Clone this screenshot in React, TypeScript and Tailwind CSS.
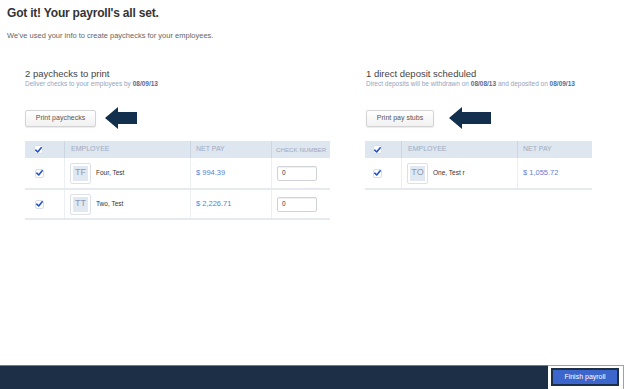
const font = { fontFamily: '"Liberation Sans", Arial, sans-serif' };

const leftRows = [
    { initials: "TF", name: "Four, Test", pay: "$ 994.39" },
    { initials: "TT", name: "Two, Test", pay: "$ 2,226.71" },
];

const rightRows = [{ initials: "TO", name: "One, Test r", pay: "$ 1,055.72" }];

function Check() {
    return (
        <span className="flex h-[9px] w-[9px] items-center justify-center rounded-[2px] border border-[#d9dfe7] bg-white">
            <svg width="7" height="6" viewBox="0 0 7 6">
                <path d="M0.8 3.2 L2.7 5 L6.2 0.8" fill="none" stroke="#2453c8" strokeWidth="1.6" strokeLinecap="round" strokeLinejoin="round" />
            </svg>
        </span>
    );
}

function Arrow({ width }: { width: number }) {
    return (
        <svg width={width} height="22" viewBox={`0 0 ${width} 22`}>
            <path d={`M0 11 L13 0 L13 5 L${width} 5 L${width} 17 L13 17 L13 22 Z`} fill="#12304d" />
        </svg>
    );
}

function Avatar({ initials }: { initials: string }) {
    return (
        <div className="h-[21px] w-[21px] rounded-[2px] border border-[#dde1e6] bg-white p-[2px]">
            <div className="flex h-full w-full items-center justify-center bg-[#e1e8f2] text-[9px] text-[#8a9ab3]">{initials}</div>
        </div>
    );
}

function Button({ label, width }: { label: string; width: string }) {
    return (
        <div className={`flex h-[17px] items-center justify-center rounded-[2px] border border-[#d4d4d4] bg-gradient-to-b from-white to-[#f1f1f1] text-[7px] text-[#555] shadow-[0_1px_1px_rgba(0,0,0,0.08)] ${width}`}>
            {label}
        </div>
    );
}

export default function App() {
    return (
        <div className="flex h-[389px] w-[624px] flex-col bg-white" style={font}>
            <div className="flex-1 pl-[7px] pt-[6px]">
                <h1 className="text-[12px] leading-[14px] font-bold tracking-[-0.2px] text-[#333]">Got it! Your payroll's all set.</h1>
                <p className="mt-[11px] text-[7.5px] leading-[9px] text-[#666]">We've used your info to create paychecks for your employees.</p>

                <div className="mt-[28px] flex">
                    {/* paychecks to print */}
                    <div className="ml-[18px] w-[305px]">
                        <h2 className="text-[9.5px] leading-[11px] text-[#444]">2 paychecks to print</h2>
                        <p className="mt-[1px] text-[6.5px] leading-[8px] text-[#93a5c0]">
                            Deliver checks to your employees by <span className="font-bold text-[#4f6c9e]">08/09/13</span>
                        </p>
                        <div className="mt-[19px] flex items-center gap-[9px]">
                            <Button label="Print paychecks" width="w-[71px]" />
                            <Arrow width={32} />
                        </div>
                        <div className="mt-[12px] border-b-2 border-[#e6e9ed]">
                            <div className="grid h-[17px] grid-cols-[40px_126px_81px_58px] items-center bg-[#dee6f0] text-[7px] text-[#9eabbf]">
                                <div className="flex h-full items-center border-r border-[#ccd6e3] pl-[9px]"><Check /></div>
                                <div className="flex h-full items-center border-r border-[#ccd6e3] pl-[6px]">EMPLOYEE</div>
                                <div className="flex h-full items-center border-r border-[#ccd6e3] pl-[5px]">NET PAY</div>
                                <div className="flex h-full items-center whitespace-nowrap pl-[4px] text-[6.2px]">CHECK NUMBER</div>
                            </div>
                            {leftRows.map((row, idx) => (
                                <div key={idx} className={`grid h-[30px] grid-cols-[40px_126px_81px_58px] ${idx > 0 ? "border-t-2 border-[#e6e9ed]" : ""}`}>
                                    <div className="flex items-center border-r border-[#eceef1] pl-[10px]"><Check /></div>
                                    <div className="flex items-center gap-[5px] border-r border-[#eceef1] pl-[5px] text-[6.5px] text-[#333]">
                                        <Avatar initials={row.initials} />
                                        {row.name}
                                    </div>
                                    <div className="flex items-center border-r border-[#eceef1] pl-[5px] text-[7.5px] text-[#5b7fd6]">{row.pay}</div>
                                    <div className="flex items-center pl-[5px]">
                                        <div className="flex h-[15px] w-[40px] items-center rounded-[2px] border border-[#cfd3d8] pl-[4px] text-[6.5px] text-[#333] shadow-[inset_0_1px_1px_rgba(0,0,0,0.06)]">0</div>
                                    </div>
                                </div>
                            ))}
                        </div>
                    </div>

                    {/* direct deposits */}
                    <div className="ml-[35px] w-[227px]">
                        <h2 className="pl-[1px] text-[9.5px] leading-[11px] text-[#444]">1 direct deposit scheduled</h2>
                        <p className="mt-[1px] pl-[1px] text-[6.5px] leading-[8px] whitespace-nowrap text-[#93a5c0]">
                            Direct deposits will be withdrawn on <span className="font-bold text-[#4f6c9e]">08/08/13</span> and deposited on <span className="font-bold text-[#4f6c9e]">08/09/13</span>
                        </p>
                        <div className="mt-[19px] flex items-center gap-[15px] pl-[1px]">
                            <Button label="Print pay stubs" width="w-[68px]" />
                            <Arrow width={42} />
                        </div>
                        <div className="mt-[12px] border-b-2 border-[#e6e9ed]">
                            <div className="grid h-[17px] grid-cols-[37px_116px_74px] items-center bg-[#dee6f0] text-[7px] text-[#9eabbf]">
                                <div className="flex h-full items-center border-r border-[#ccd6e3] pl-[8px]"><Check /></div>
                                <div className="flex h-full items-center border-r border-[#ccd6e3] pl-[6px]">EMPLOYEE</div>
                                <div className="flex h-full items-center pl-[5px]">NET PAY</div>
                            </div>
                            {rightRows.map((row, idx) => (
                                <div key={idx} className="grid h-[30px] grid-cols-[37px_116px_74px]">
                                    <div className="flex items-center border-r border-[#eceef1] pl-[8px]"><Check /></div>
                                    <div className="flex items-center gap-[5px] border-r border-[#eceef1] pl-[5px] text-[6.5px] text-[#333]">
                                        <Avatar initials={row.initials} />
                                        {row.name}
                                    </div>
                                    <div className="flex items-center pl-[5px] text-[7.5px] text-[#5b7fd6]">{row.pay}</div>
                                </div>
                            ))}
                        </div>
                    </div>
                </div>
            </div>

            <footer className="flex h-[24px]">
                <div className="flex-1 border-t border-[#6d7c8c] bg-[#1c2f47]"></div>
                <div className="flex w-[76px] items-start border-t border-r border-[#9aa3ad] bg-white pt-[2px] pl-[3px]">
                    <div className="flex h-[18px] w-[68px] items-center justify-center border-2 border-[#1c2f47] bg-[#3d66cc] text-[7px] text-white">Finish payroll</div>
                </div>
            </footer>
        </div>
    );
}
